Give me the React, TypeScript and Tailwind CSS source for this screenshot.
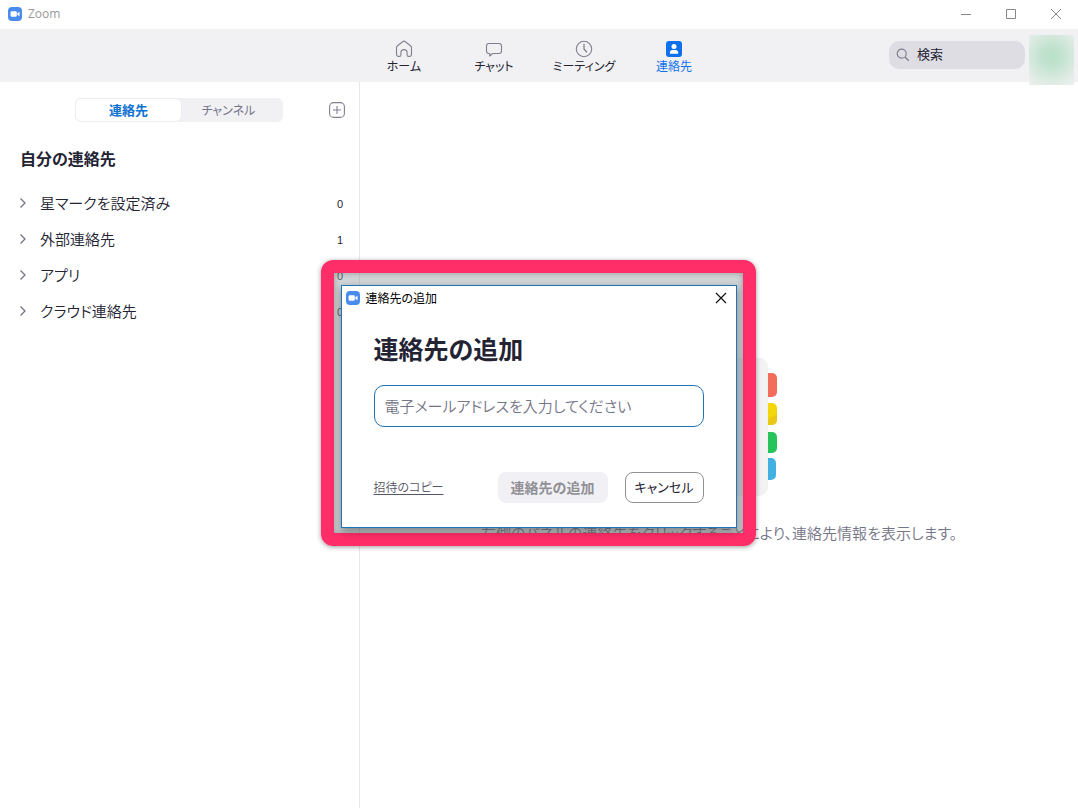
import React, { useState } from "react";

function ZoomLogo() {
  return (
    <svg viewBox="0 0 14 14" className="size-3.5 shrink-0" aria-hidden="true">
      <rect width="14" height="14" rx="4" fill="#4a8cee" />
      <rect x="2.6" y="4.3" width="6.2" height="5.4" rx="1.2" fill="#fff" />
      <path d="M9.3 6.3 11.5 4.7v4.6L9.3 7.7Z" fill="#fff" />
    </svg>
  );
}

const stroke = { fill: "none", stroke: "#80808f", strokeWidth: 1.1 };

function HomeIcon() {
  return (
    <svg viewBox="0 0 18 18" className="size-[18px]" aria-hidden="true">
      <path
        {...stroke}
        strokeLinejoin="round"
        d="M1.5 7.6c0-.8.3-1.4 1-1.9L7.600 1.700c.9-.7 1.900-.7 2.800 0l5.100 4c.700.5 1 1.100 1 1.900v7c0 1.100-.7 1.800-1.800 1.800h-1.200c-.9 0-1.400-.5-1.400-1.400v-2.300c0-1.900-1.200-3.100-3.100-3.100s-3.100 1.200-3.100 3.100V15c0 .9-.5 1.400-1.400 1.400H3.300c-1.100 0-1.800-.7-1.800-1.800Z"
      />
    </svg>
  );
}

function ChatIcon() {
  return (
    <svg viewBox="0 0 18 18" className="size-[18px]" aria-hidden="true">
      <path
        {...stroke}
        strokeLinejoin="round"
        d="M4 3.500h10c1.700 0 2.500.8 2.500 2.500v5c0 1.700-.8 2.500-2.500 2.500H7.600L4.700 16v-2.500H4c-1.700 0-2.500-.8-2.500-2.500V6c0-1.700.8-2.500 2.500-2.500Z"
      />
    </svg>
  );
}

function ClockIcon() {
  return (
    <svg viewBox="0 0 18 18" className="size-[18px]" aria-hidden="true">
      <circle cx="9" cy="9" r="7.700" {...stroke} />
      <path {...stroke} strokeWidth={1.3} strokeLinecap="round" d="M9 4.500V9l2.600 3" />
    </svg>
  );
}

function ContactIcon() {
  return (
    <svg viewBox="0 0 18 18" className="size-[18px]" aria-hidden="true">
      <rect x="1" y="1" width="16" height="16" rx="3" fill="#0e71eb" />
      <circle cx="9" cy="6.500" r="2.500" fill="#fff" />
      <path d="M4.900 13.700v-1.200c0-1.500 1-2.400 2.500-2.400h3.200c1.500 0 2.500.9 2.500 2.400v1.200Z" fill="#fff" />
    </svg>
  );
}

const navItems = [
  { label: "ホーム", icon: <HomeIcon /> },
  { label: "チャット", icon: <ChatIcon /> },
  { label: "ミーティング", icon: <ClockIcon /> },
  { label: "連絡先", icon: <ContactIcon />, active: true },
];

const groups = [
  { name: "星マークを設定済み", count: 0 },
  { name: "外部連絡先", count: 1 },
  { name: "アプリ", count: 0 },
  { name: "クラウド連絡先", count: 0 },
];

function TitleBar() {
  return (
    <div className="flex h-[29px] shrink-0 items-center bg-white pb-0.5 pl-2">
      <ZoomLogo />
      <span className="ml-1.5 font-['Open_Sans',sans-serif] text-xs text-[#999]">Zoom</span>
      <div className="ml-auto flex">
        <button aria-label="最小化" className="flex h-[27px] w-[45px] items-center justify-center">
          <svg viewBox="0 0 12 12" className="size-3"><path d="M1 6.500h10" stroke="#888" /></svg>
        </button>
        <button aria-label="最大化" className="flex h-[27px] w-[45px] items-center justify-center">
          <svg viewBox="0 0 12 12" className="size-3"><path d="M1.500 1.500h9v9h-9Z" fill="none" stroke="#888" /></svg>
        </button>
        <button aria-label="閉じる" className="flex h-[27px] w-[45px] items-center justify-center">
          <svg viewBox="0 0 12 12" className="size-3"><path d="m1 1 10 10M11 1 1 11" stroke="#888" /></svg>
        </button>
      </div>
    </div>
  );
}

function NavBar() {
  return (
    <header className="grid h-[53px] shrink-0 grid-cols-[1fr_auto_1fr] bg-[#f1f1f3]">
      <nav className="col-start-2 flex">
        {navItems.map((item) => (
          <button
            key={item.label}
            className={`flex w-[90px] flex-col items-center pt-[11px] text-xs leading-4 ${item.active ? "text-[#0e71eb]" : "text-[#232333]"}`}
          >
            {item.icon}
            {item.label}
          </button>
        ))}
      </nav>
      <div className="flex items-start justify-end gap-1 pr-1">
        <label className="mt-3 flex h-7 w-[136px] items-center rounded-[10px] bg-[#dddde3] pl-[7px]">
          <svg viewBox="0 0 14 14" className="size-3.5 shrink-0" aria-hidden="true">
            <circle cx="5.700" cy="5.700" r="4.500" {...stroke} strokeWidth={1.2} />
            <path d="m9 9 3.800 3.800" {...stroke} strokeWidth={1.4} />
          </svg>
          <input
            type="search"
            aria-label="検索"
            placeholder="検索"
            className="ml-[7px] w-full min-w-0 bg-transparent pb-0.5 text-[13px] outline-none placeholder:text-[#232333]"
          />
        </label>
        <button
          aria-label="プロフィール"
          className="mt-1.5 h-[50px] w-[45px] shrink-0 bg-[radial-gradient(circle_at_50%_42%,#b9e0c8_0%,#c3e3cf_30%,#e1ece6_75%,#edf0ef_100%)]"
        />
      </div>
    </header>
  );
}

function Sidebar() {
  return (
    <aside className="w-[360px] shrink-0 border-r border-[#e8e8ec] bg-white">
      <div className="flex items-center pt-4 pl-[75px]">
        <div className="flex h-6 w-52 rounded-md bg-[#f1f1f4]">
          <button className="w-[107px] rounded-md border border-[#ececf1] bg-white text-[13px] leading-5 font-bold text-[#0e71d0]">
            連絡先
          </button>
          <button className="flex-1 pr-2 text-xs text-[#747487]">チャンネル</button>
        </div>
        <button aria-label="追加" className="mr-3.5 ml-auto">
          <svg viewBox="0 0 16 16" className="size-4">
            <rect x=".6" y=".6" width="14.800" height="14.800" rx="4" {...stroke} />
            <path d="M4 8h8M8 4v8" {...stroke} />
          </svg>
        </button>
      </div>
      <h2 className="mt-6 pl-5 text-[16px] leading-6 font-bold text-[#232333]">自分の連絡先</h2>
      <ul className="mt-[15px]">
        {groups.map((g) => (
          <li key={g.name}>
            <button className="flex h-9 w-full items-center pr-4 pl-[19px] text-[#232333]">
              <svg viewBox="0 0 8 12" className="h-3 w-2" aria-hidden="true">
                <path d="m1.500 1.500 4.500 4.500-4.500 4.500" fill="none" stroke="#747487" strokeWidth="1.300" />
              </svg>
              <span className="ml-[13px] text-[15px] leading-6 font-[350]">{g.name}</span>
              <span className="ml-auto pt-0.5 font-['Liberation_Sans',sans-serif] text-[11px] leading-4">{g.count}</span>
            </button>
          </li>
        ))}
      </ul>
    </aside>
  );
}

function AddressBook() {
  return (
    <svg viewBox="0 0 116 138" className="h-[138px] w-[116px]" aria-hidden="true">
      <rect x="92" y="15" width="24" height="24" rx="5" fill="#f26d5b" />
      <rect x="92" y="45" width="24" height="22" rx="5" fill="#f4d60c" />
      <path d="M92 62c10 1 18-1 24-6v6a5 5 0 0 1-5 5H92Z" fill="#e9c815" />
      <rect x="92" y="74" width="24" height="21" rx="5" fill="#27c45e" />
      <rect x="92" y="100" width="23" height="22" rx="5" fill="#43b0e2" />
      <rect width="107" height="138" rx="9" fill="#f2f2f3" />
    </svg>
  );
}

function AddContactDialog() {
  const [email, setEmail] = useState("");
  return (
    <div className="absolute inset-0 flex items-center justify-center pr-0.5 pb-0.5">
      <div className="rounded-xl border-[13px] border-[#ff2d68] bg-[#9aa3a8]/45 pt-3 pr-1.5 pb-[5px] pl-[7px] shadow-[0_1px_5px_rgba(0,0,0,0.4),inset_0_0_6px_rgba(0,0,0,0.3)]">
        <section
          role="dialog"
          aria-labelledby="dialog-title"
          className="w-[396px] border border-[#1d74b8] bg-white shadow-[0_3px_8px_rgba(0,0,0,0.4)]"
        >
          <div className="flex h-6 items-center pr-2 pl-1">
            <ZoomLogo />
            <span className="ml-1.5 text-xs text-black">連絡先の追加</span>
            <button aria-label="閉じる" className="ml-auto">
              <svg viewBox="0 0 14 14" className="size-3.5"><path d="m2 2 10 10M12 2 2 12" stroke="#111" strokeWidth="1.200" /></svg>
            </button>
          </div>
          <form className="px-8 pb-6" onSubmit={(e) => e.preventDefault()}>
            <h1 id="dialog-title" className="mt-[22px] text-[25px] leading-8 font-bold text-[#232333]">
              連絡先の追加
            </h1>
            <input
              type="email"
              aria-label="電子メールアドレス"
              value={email}
              onChange={(e) => setEmail(e.target.value)}
              placeholder="電子メールアドレスを入力してください"
              className="mt-[21px] block h-[42px] w-full rounded-[10px] border border-[#1d74b8] px-2.5 pb-0.5 text-[15px] font-[350] outline-none placeholder:text-[#747487]"
            />
            <div className="mt-[45px] flex items-center">
              <a href="#copy" className="pb-0.5 text-xs font-[350] text-[#555566] underline underline-offset-2">招待のコピー</a>
              <button disabled className="ml-auto h-[31px] w-[110px] rounded-lg bg-[#f1f0f5] pb-0.5 text-sm font-bold text-[#909096]">
                連絡先の追加
              </button>
              <button type="button" className="ml-[17px] h-[31px] w-[79px] rounded-lg border border-[#909096] pb-0.5 text-[13px] text-[#232333]">
                キャンセル
              </button>
            </div>
          </form>
        </section>
      </div>
    </div>
  );
}

export default function App() {
  return (
    <div className="relative flex min-h-screen flex-col bg-white font-['Noto_Sans_CJK_JP',sans-serif] [font-feature-settings:'palt']">
      <TitleBar />
      <NavBar />
      <div className="flex flex-1">
        <Sidebar />
        <main className="flex flex-1 flex-col items-center justify-center pt-3">
          <AddressBook />
          <p className="mt-[25px] text-[15px] leading-6 font-[350] text-[#747487]">
            左側のパネルの連絡先をクリックすることにより、連絡先情報を表示します。
          </p>
        </main>
      </div>
      <AddContactDialog />
    </div>
  );
}
